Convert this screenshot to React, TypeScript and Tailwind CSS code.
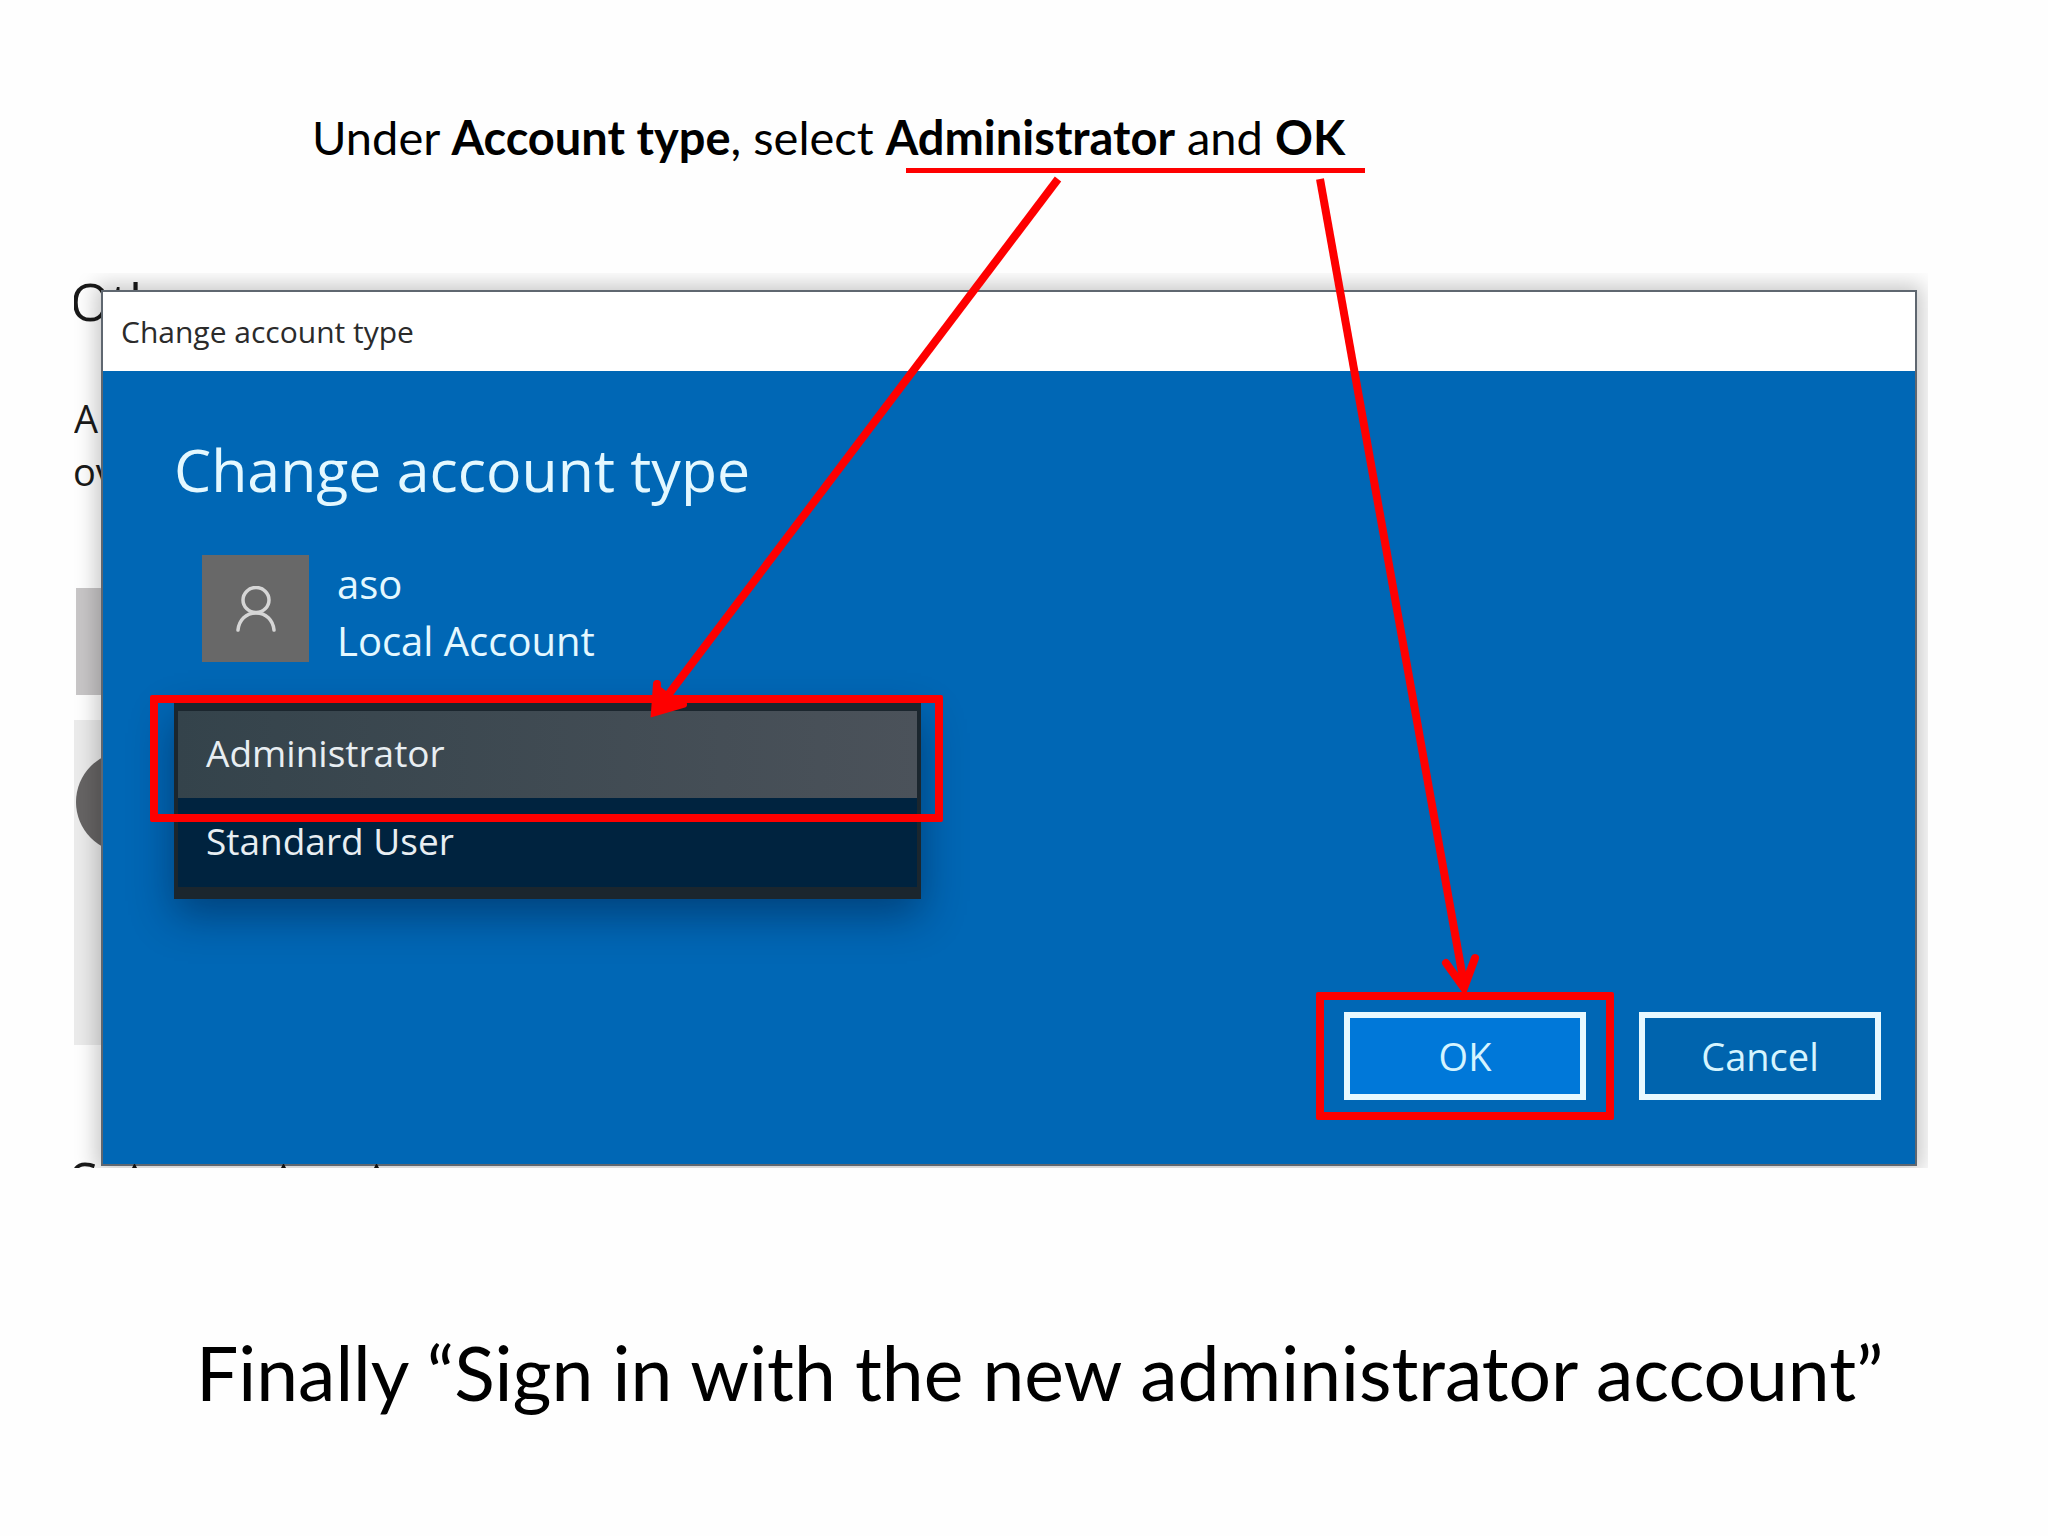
import React from "react";

function PersonIcon() {
  return (
    <svg viewBox="0 0 40 46" className="h-[46px] w-10" fill="none" stroke="#d6d6d6" strokeWidth="3.5" strokeLinecap="round" aria-hidden="true">
      <ellipse cx="20" cy="14" rx="13" ry="12.5" />
      <path d="M2 44C3 34 10 27 20 27s17 7 18 17" />
    </svg>
  );
}

function Highlight({ className }: { className: string }) {
  return <span aria-hidden="true" className={`pointer-events-none absolute rounded-xs border-8 border-[#fe0000] ${className}`} />;
}

function SettingsBehind() {
  return (
    <div aria-hidden="true" className="absolute inset-0 overflow-hidden text-[#1a1a1a]">
      <p className="-mt-[7px] -ml-1 text-[52px] leading-[70px] whitespace-nowrap">Oth</p>
      <div className="mt-[56px] text-[38px] leading-[53px]">
        <p>A</p>
        <p className="-ml-px">ov</p>
      </div>
      <div className="mt-[90px] ml-0.5 h-[107px] w-40 bg-[#c8c6c7]" />
      <div className="mt-[25px] h-[325px] w-60 bg-[#ebebeb] pt-[31px] pl-0.5">
        <div className="size-[102px] rounded-full bg-[#666464]" />
      </div>
      <p className="-ml-1 mt-[100px] text-[52px] leading-[70px]">S</p>
    </div>
  );
}

function Dialog() {
  return (
    <section
      aria-label="Change account type"
      className="relative mt-[17px] mr-[11px] mb-0.5 ml-[27px] border-2 border-[#5f6770] bg-[#0067b5] shadow-[0_0_20px_5px_rgba(0,0,0,0.22)]"
    >
      <header className="flex h-[79px] items-center bg-white pl-[18px]">
        <span className="text-[30px] leading-10 text-[#2b2b2b]">Change account type</span>
      </header>
      <div className="pr-[34px] pb-[64px] pl-[71px]">
        <h1 className="pt-[58px] text-[59px] leading-[80px] font-normal text-[#e4f8ff]">Change account type</h1>
        <div className="mt-[46px] ml-7 flex items-start gap-7">
          <div className="flex size-[107px] items-center justify-center bg-[#686868]">
            <PersonIcon />
          </div>
          <div className="text-[40px] leading-[57px] text-[#e4f8ff]">
            <p>aso</p>
            <p>Local Account</p>
          </div>
        </div>
        <div className="relative mt-[34px] w-[747px]">
          <div role="listbox" aria-label="Account type" className="border-4 border-t-8 border-b-12 border-[#1b262e] bg-[#00233f] text-[37px] text-[#e8eef2] shadow-[0_16px_40px_rgba(0,20,50,0.45)]">
            <button type="button" role="option" aria-selected="true" className="flex h-[87px] w-full items-center bg-linear-to-r from-[#34434b] to-[#4b525a] pb-1 pl-7">
              Administrator
            </button>
            <button type="button" role="option" aria-selected="false" className="flex h-[89px] w-full items-center pb-1 pl-7">
              Standard User
            </button>
          </div>
          <Highlight className="-top-2 -right-[22px] -left-6 h-[127px]" />
        </div>
        <div className="mt-[113px] flex justify-end gap-[53px]">
          <div className="relative">
            <button type="button" className="h-[88px] w-[242px] border-6 border-[#e8f9ff] bg-[#0078d9] text-[38px] text-[#d5f4ff]">
              OK
            </button>
            <Highlight className="-inset-x-7 -inset-y-5" />
          </div>
          <button type="button" className="h-[88px] w-[242px] border-6 border-[#e8f9ff] bg-[#0064ae] text-[38px] text-[#d5f4ff]">
            Cancel
          </button>
        </div>
      </div>
    </section>
  );
}

function Arrows() {
  return (
    <svg viewBox="0 0 2048 1536" preserveAspectRatio="none" className="pointer-events-none absolute inset-0 h-full w-full" fill="none" stroke="#fe0000" strokeWidth="8" aria-hidden="true">
      <path d="M1058 179L656 711" />
      <path d="M657 684L655 712L683 704" fill="#fe0000" strokeLinecap="round" />
      <path d="M1320 179L1464 984" />
      <path d="M1446 963L1464 988L1475 958" strokeLinecap="round" />
    </svg>
  );
}

export default function App() {
  return (
    <main className="relative min-h-screen bg-[#fefefe] font-['Lato',sans-serif] text-black">
      <p className="pt-[106px] pl-[312px] text-[47px] leading-[62px]">
        Under <b>Account type</b>, select{" "}
        <span className="relative inline-block">
          <b>Administrator</b> and <b>OK</b>
          <span aria-hidden="true" className="absolute top-[62px] -right-5 left-5 h-[5px] bg-[#fe0000]" />
        </span>
      </p>
      <div className="relative mt-[105px] mr-[120px] ml-[74px] flow-root overflow-hidden font-['Open_Sans',sans-serif]">
        <SettingsBehind />
        <Dialog />
        <svg viewBox="0 0 320 4" className="absolute bottom-0 left-[58px] h-1 w-80" fill="#111" aria-hidden="true">
          <path d="M0 4L2 0H3L5 4ZM149 4L151 0H152L154 4ZM242 4L244 0H245L247 4Z" />
        </svg>
      </div>
      <p className="mt-[156px] pl-[196px] text-[75px] leading-[96px] whitespace-nowrap">
        Finally “Sign in with the new administrator account”
      </p>
      <Arrows />
    </main>
  );
}
